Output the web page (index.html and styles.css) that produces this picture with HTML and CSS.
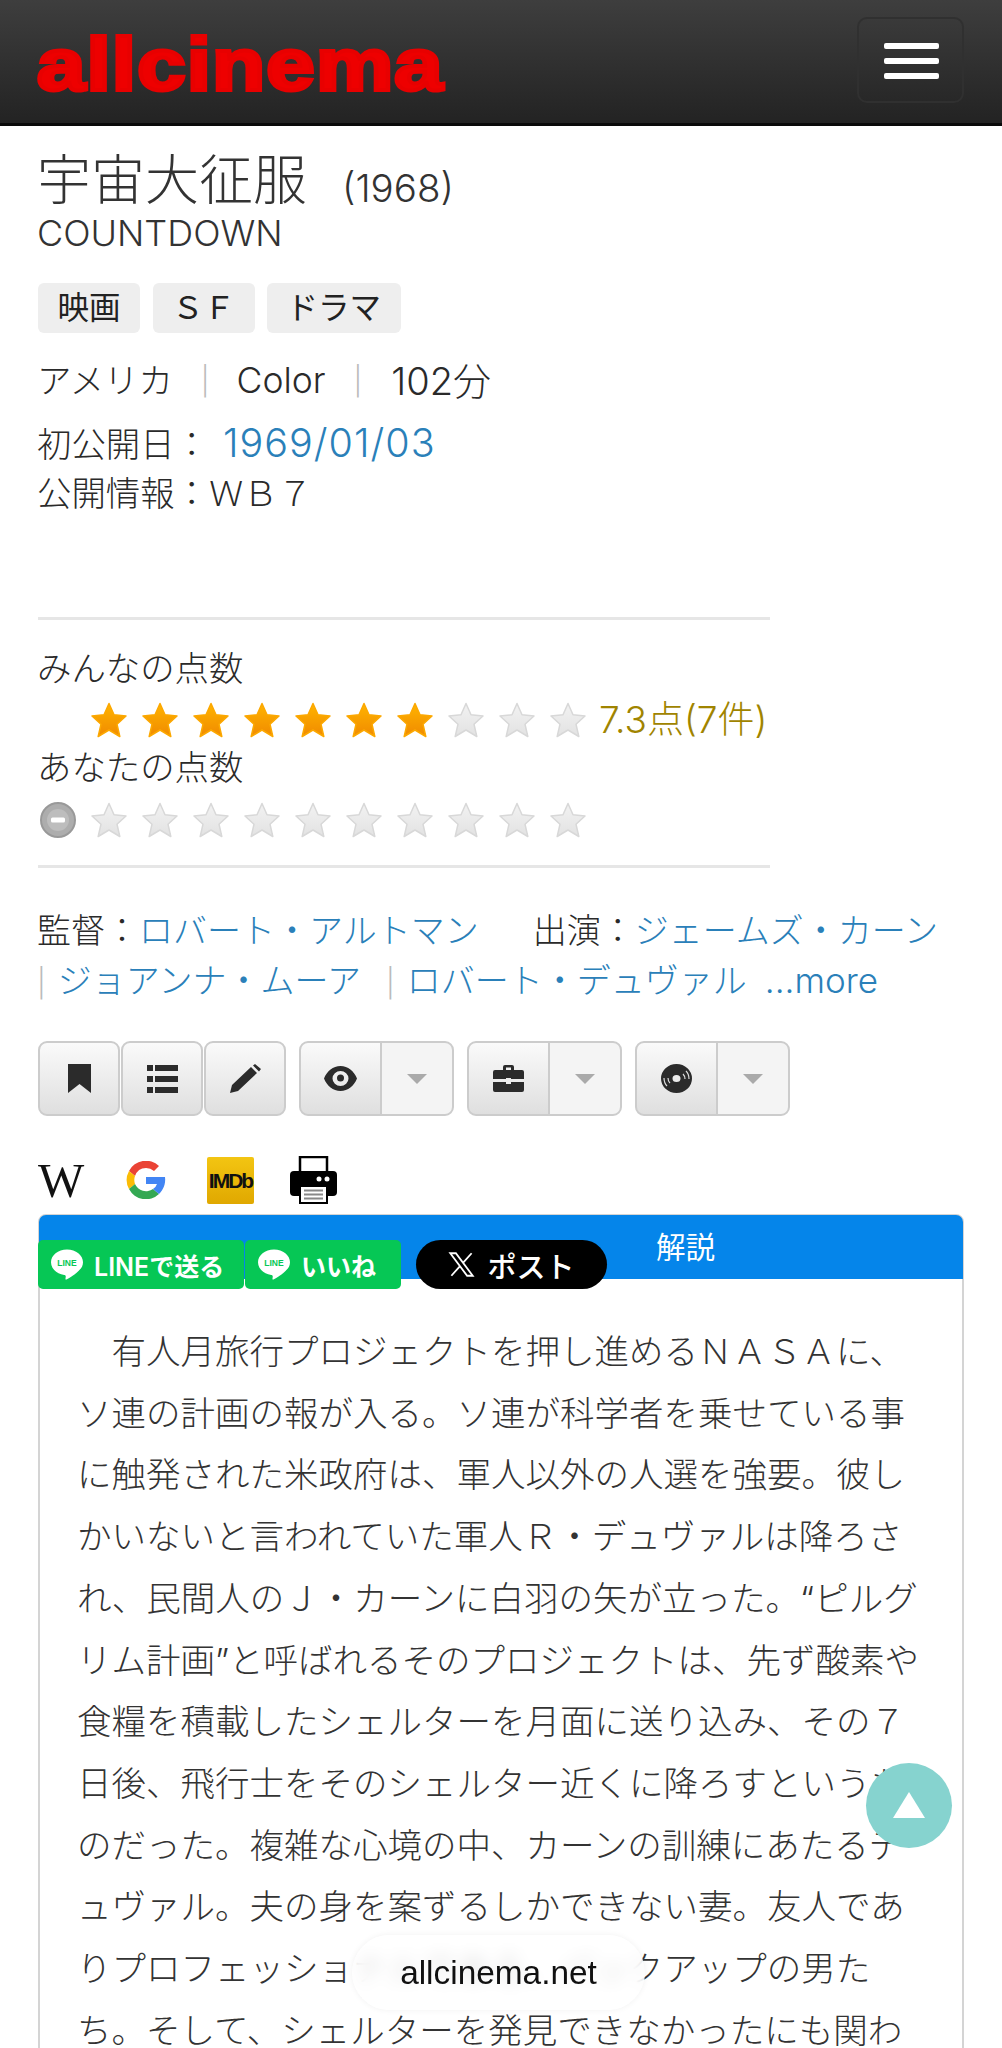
FILE: index.html
```html
<!DOCTYPE html>
<html lang="ja">
<head>
<meta charset="utf-8">
<title>宇宙大征服 - allcinema</title>
<link rel="stylesheet" href="styles.css">
</head>
<body>
<svg class="defs" width="0" height="0" aria-hidden="true">
  <defs>
    <linearGradient id="gold" x1="0" y1="0" x2="0" y2="1">
      <stop offset="0" stop-color="#ffb400"/><stop offset="1" stop-color="#f08a00"/>
    </linearGradient>
    <linearGradient id="silver" x1="0" y1="0" x2="0" y2="1">
      <stop offset="0" stop-color="#f2f2f2"/><stop offset="1" stop-color="#e2e2e2"/>
    </linearGradient>
    <symbol id="star" viewBox="0 0 36 36">
      <path d="M18 1.500 23 12.800 35 14 26 22.200 28.800 34.500 18 28 7.200 34.500 10 22.200 1 14 13 12.800Z" stroke-linejoin="round"/>
    </symbol>
    <symbol id="line-logo" viewBox="0 0 34 32">
      <path fill="#fff" d="M17 1C8 1 1 6.700 1 13.800c0 6.300 5.600 11.600 13.200 12.600.5.100 1.200.3 1.400.8.200.4.100 1 .1 1.400l-.2 1.400c-.1.400-.3 1.500 1.500.8s9.100-5.400 12.400-9.200C31.600 19.700 33 17 33 13.800 33 6.700 26 1 17 1Z"/>
      <text x="17" y="17.500" text-anchor="middle" class="line-word">LINE</text>
    </symbol>
  </defs>
</svg>
<div class="page">
  <header class="topbar">
    <span class="logo">allcinema</span>
    <button class="toggle" type="button" aria-label="menu"><i></i><i></i><i></i></button>
  </header>
  <main class="content">
    <h1 class="title">宇宙大征服<small>(1968)</small></h1>
    <p class="orig">COUNTDOWN</p>
    <ul class="tags"><li>映画</li><li>ＳＦ</li><li>ドラマ</li></ul>
    <p class="info"><span>アメリカ</span><b>|</b><span class="color">Color</span><b>|</b><span class="dur">102分</span></p>
    <p class="release">初公開日：<a class="date" href="#">1969/01/03</a></p>
    <p class="release">公開情報：ＷＢ７</p>
    <section class="rating">
      <p class="rate-label">みんなの点数</p>
      <div class="stars-row">
        <svg class="star on"><use href="#star"/></svg><svg class="star on"><use href="#star"/></svg><svg class="star on"><use href="#star"/></svg><svg class="star on"><use href="#star"/></svg><svg class="star on"><use href="#star"/></svg><svg class="star on"><use href="#star"/></svg><svg class="star on"><use href="#star"/></svg><svg class="star"><use href="#star"/></svg><svg class="star"><use href="#star"/></svg><svg class="star"><use href="#star"/></svg>
        <span class="score">7.3点(7件)</span>
      </div>
      <p class="rate-label">あなたの点数</p>
      <div class="stars-row mine">
        <svg class="minus" viewBox="0 0 36 36"><circle cx="18" cy="18" r="17" fill="#adadad" stroke="#999" stroke-width="2"/><circle cx="18" cy="18" r="11" fill="#bdbdbd"/><rect x="11" y="15.500" width="14" height="5" rx="1.500" fill="#fff"/></svg>
        <svg class="star"><use href="#star"/></svg><svg class="star"><use href="#star"/></svg><svg class="star"><use href="#star"/></svg><svg class="star"><use href="#star"/></svg><svg class="star"><use href="#star"/></svg><svg class="star"><use href="#star"/></svg><svg class="star"><use href="#star"/></svg><svg class="star"><use href="#star"/></svg><svg class="star"><use href="#star"/></svg><svg class="star"><use href="#star"/></svg>
      </div>
    </section>
    <p class="cast">監督：<a href="#">ロバート・アルトマン</a><span class="gap"></span>出演：<a href="#">ジェームズ・カーン</a></p>
    <p class="cast"><b>|</b><a href="#">ジョアンナ・ムーア</a><b class="bar2">|</b><a href="#">ロバート・デュヴァル</a><a class="more" href="#">...more</a></p>
    <div class="actions">
      <div class="btn-group">
        <button class="btn" type="button"><svg width="23" height="29" viewBox="0 0 23 29"><path d="M0 0H23V29L11.500 20 0 29Z"/></svg></button>
        <button class="btn" type="button"><svg width="31" height="28" viewBox="0 0 31 28"><path d="M0 0h6v6H0zM8 0h23v6H8zM0 11h6v6H0zM8 11h23v6H8zM0 22h6v6H0zM8 22h23v6H8z"/></svg></button>
        <button class="btn" type="button"><svg width="31" height="29" viewBox="0 0 31 29"><path d="M0 29 2 21 21 3 27 9 8 27ZM23 1.500 25 0 31 5 29 7.500Z"/></svg></button>
      </div>
      <div class="split">
        <button class="btn main" type="button"><svg width="33" height="25" viewBox="0 0 33 25"><path fill-rule="evenodd" d="M16.500 0C24 0 30 5 33 12.500 30 20 24 25 16.500 25S3 20 0 12.500C3 5 9 0 16.500 0ZM16.500 5a8 7.500 0 1 0 0 15 8 7.500 0 0 0 0-15Z"/><circle cx="16.500" cy="12" r="3.500"/></svg></button>
        <button class="btn caret" type="button"><i></i></button>
      </div>
      <div class="split">
        <button class="btn main" type="button"><svg width="31" height="27" viewBox="0 0 31 27"><path fill-rule="evenodd" d="M10 5V2q0-2 2-2h7q2 0 2 2v3h8q2 0 2 2v7H18v-1h-5v1H0V7q0-2 2-2ZM13 2.500V5h5V2.500Z"/><path d="M0 17h13v2h5v-2h13v8q0 2-2 2H2q-2 0-2-2Z"/></svg></button>
        <button class="btn caret" type="button"><i></i></button>
      </div>
      <div class="split">
        <button class="btn main" type="button"><svg width="31" height="29" viewBox="0 0 31 29"><path fill-rule="evenodd" d="M15.500 0a15.500 14.500 0 1 0 0 29 15.500 14.500 0 0 0 0-29ZM15.500 11a4 3.500 0 1 1 0 7 4 3.500 0 0 1 0-7Z"/><path d="M22 10q2 2 2 5M25 7q3 3 3 8M9 19q-2-2-2-5M6 22q-3-3-3-8" fill="none" stroke="#ddd" stroke-width="1.200"/></svg></button>
        <button class="btn caret" type="button"><i></i></button>
      </div>
    </div>
    <div class="links">
      <span class="wiki">W</span>
      <svg class="goog" width="40" height="38" viewBox="0 0 40 38"><path d="M20 7a12 12 0 0 1 8 3l5-5A19 19 0 0 0 3 10l6 5A12 12 0 0 1 20 7Z" fill="#ea4335"/><path d="M3 10a19 19 0 0 0 0 18l6-5a12 12 0 0 1 0-8Z" fill="#fbbc05"/><path d="M9 23a12 12 0 0 0 18 5l6 5A19 19 0 0 1 3 28Z" fill="#34a853"/><path d="M39 16H20v7h11a9 9 0 0 1-4 5l6 5c4-4 7-10 6-17Z" fill="#4285f4"/></svg>
      <span class="imdb">IMDb</span>
      <svg class="print" width="47" height="48" viewBox="0 0 47 48"><path d="M10 16V1h27v15" fill="#fff" stroke="#000" stroke-width="2.500"/><path d="M4 15h39q4 0 4 4v17q0 4-4 4H4q-4 0-4-4V19q0-4 4-4Z"/><circle cx="29" cy="23" r="2.500" fill="#fff"/><circle cx="37" cy="23" r="2.500" fill="#fff"/><rect x="10" y="30" width="27" height="17" fill="#fff" stroke="#000" stroke-width="2"/><path d="M14 34.500h19M14 38.500h19M14 42.500h19" stroke="#888" stroke-width="2"/></svg>
    </div>
    <section class="panel">
      <div class="panel-head">
        <div class="share">
          <a class="line line-send" href="#"><svg width="34" height="33"><use href="#line-logo"/></svg>LINEで送る</a>
          <a class="line line-like" href="#"><svg width="34" height="33"><use href="#line-logo"/></svg>いいね</a>
          <a class="post" href="#"><svg width="27" height="27" viewBox="0 0 24 24"><path fill="none" stroke="#fff" stroke-width="1.600" d="M2 2h5l15 20h-5ZM21 2 13.500 10.300M10.500 13.600 3 22"/></svg>ポスト</a>
        </div>
        <span class="panel-title">解説</span>
      </div>
      <div class="panel-body">
        <p class="synopsis">　有人月旅行プロジェクトを押し進めるＮＡＳＡに、<br>ソ連の計画の報が入る。ソ連が科学者を乗せている事<br>に触発された米政府は、軍人以外の人選を強要。彼し<br>かいないと言われていた軍人Ｒ・デュヴァルは降ろさ<br>れ、民間人のＪ・カーンに白羽の矢が立った。“ピルグ<br>リム計画”と呼ばれるそのプロジェクトは、先ず酸素や<br>食糧を積載したシェルターを月面に送り込み、その７<br>日後、飛行士をそのシェルター近くに降ろすというも<br>のだった。複雑な心境の中、カーンの訓練にあたるデ<br>ュヴァル。夫の身を案ずるしかできない妻。友人であ<br>りプロフェッショナルである、バックアップの男た<br>ち。そして、シェルターを発見できなかったにも関わ</p>
      </div>
    </section>
  </main>
  <a class="totop" href="#" aria-label="top"><i></i></a>
  <div class="urlbar">allcinema.net</div>
</div>
</body>
</html>
```
FILE: styles.css
```css
* { box-sizing: border-box; }
html, body { margin: 0; padding: 0; background: #fff; }
body {
  font-family: Inter, "Noto Sans CJK JP", sans-serif;
  font-size: 34.4px;
  font-weight: 300;
  color: #2a2a2a;
}
p, h1, ul { margin: 0; padding: 0; }
a { color: #2a80b9; text-decoration: none; }
.defs { position: absolute; }
.page { position: relative; width: 1002px; height: 2048px; overflow: hidden; }

.topbar {
  height: 126px;
  display: flex;
  align-items: flex-start;
  justify-content: space-between;
  padding: 17px 38px 0 37px;
  background: linear-gradient(#3e3e3e, #232323);
  border-bottom: 3px solid #0a0a0a;
}
.logo {
  display: block;
  margin-top: 3px;
  font-family: "Liberation Sans", sans-serif;
  font-size: 74px;
  line-height: 90px;
  font-weight: 700;
  color: #ee0000;
  -webkit-text-stroke: 4px #e80000;
  letter-spacing: 1px;
  transform: scaleX(1.175);
  transform-origin: left center;
}
.toggle {
  width: 107px;
  height: 86px;
  padding: 24px 25px 0;
  background: none;
  border: 2px solid #303030;
  border-radius: 10px;
  display: flex;
  flex-direction: column;
  gap: 9px;
}
.toggle i { display: block; width: 55px; height: 6px; flex: none; border-radius: 2px; background: #fff; }

.content { padding: 0 38px; }
.title, .orig, .info, .release, .rate-label, .cast { margin-left: -1px; }
.title { font-size: 54px; font-weight: 300; line-height: 74px; margin-top: 18px; color: #333; }
.title small { font-size: 38.5px; line-height: 1; margin-left: 35px; position: relative; top: 2px; }
.orig { font-size: 36px; line-height: 42px; margin-top: -6px; color: #333; }
.tags { list-style: none; display: flex; gap: 12.5px; margin-top: 29px; }
.tags li { height: 50px; padding: 0 19.5px; line-height: 50px; font-size: 31.5px; font-weight: 400; background: #eee; border-radius: 6px; color: #222; }
.info { display: flex; align-items: center; margin-top: 23px; line-height: 50px; }
.info b { font-weight: 300; color: #bbb; margin: 0 27px 0 28px; font-size: 28px; }
.color { font-size: 35.5px; }
.dur { font-size: 38px; margin-left: 2px; }
.release { line-height: 49px; }
.info + .release { margin-top: 14px; }
.date { font-size: 39.5px; line-height: 1; letter-spacing: 1px; margin-left: 14px; }

.rating { width: 732px; margin-top: 99px; border-top: 3px solid #e6e6e6; border-bottom: 3px solid #e6e6e6; padding: 25px 0 20px; }
.rate-label { line-height: 48px; }
.stars-row { height: 49px; display: flex; align-items: center; padding-left: 53px; gap: 15px; margin-top: 2px; }
.stars-row.mine { padding-left: 2px; gap: 15px; height: 50px; margin-top: 3px; }
.star { width: 36px; height: 36px; flex: none; fill: url(#silver); stroke: #d8d8d8; stroke-width: 1.500; filter: blur(0.5px); }
.star.on { fill: url(#gold); stroke: #fca800; }
.minus { width: 36px; height: 36px; flex: none; filter: blur(0.4px); }
.score { color: #a08400; font-size: 37px; margin: -6px 0 0 -2px; white-space: nowrap; }

.cast { font-size: 34px; line-height: 50px; white-space: nowrap; }
.rating + .cast { margin-top: 38px; }
.cast b { font-weight: 300; color: #bbb; font-size: 28px; line-height: 1; margin: 0 12px 0 0; }
.cast .bar2 { margin: 0 12px 0 25px; }
.gap { display: inline-block; width: 54px; }
.more { margin-left: 18px; font-size: 35px; line-height: 1; }

.actions { display: flex; margin-top: 35px; gap: 13px; }
.btn-group { display: flex; gap: 1px; }
.btn {
  height: 75px;
  width: 82px;
  padding: 0;
  display: flex;
  align-items: center;
  justify-content: center;
  border: 2px solid #ccc;
  border-radius: 9px;
  background: linear-gradient(#fafafa, #dfdfdf);
}
.btn svg { fill: #2b2b2b; }
.split { display: flex; }
.split .main { width: 83px; border-radius: 9px 0 0 9px; margin-right: -1px; }
.split .caret { width: 73px; border-left-width: 1px; border-radius: 0 9px 9px 0; background: #f4f4f4; }
.caret i { width: 0; height: 0; border: 10px solid transparent; border-top-color: #aaa; border-bottom-width: 0; }

.links { display: flex; align-items: center; height: 50px; margin-top: 39px; }
.wiki { width: 46px; font-family: "Liberation Serif", serif; font-size: 49px; font-weight: 400; line-height: 50px; color: #111; transform: translateY(1px); }
.goog { margin-left: 42px; }
.imdb {
  width: 47px;
  height: 47px;
  margin-left: 41px;
  background: linear-gradient(#f3c512, #e0a800);
  border-radius: 2px;
  font-family: "Liberation Sans", sans-serif;
  font-size: 21px;
  font-weight: 700;
  line-height: 47px;
  text-align: center;
  color: #111;
  letter-spacing: -2px;
}
.print { margin-left: 36px; }

.panel {
  width: 926px;
  margin-top: 9px;
  border: 2px solid #d4d4d4;
  border-radius: 8px 8px 0 0;
}
.panel-head {
  height: 64px;
  margin: -1px -1px 0;
  background: #0585ea;
  border-radius: 7px 7px 0 0;
  display: flex;
  position: relative;
}
.share { position: absolute; left: -1px; top: 25px; display: flex; align-items: flex-start; }
.line {
  display: flex;
  align-items: center;
  height: 49px;
  background: #06c755;
  color: #fff;
  border-radius: 5px;
  font-size: 25px;
  font-weight: 600;
}
.line svg { flex: none; }
.line-send { width: 206px; padding-left: 12px; gap: 10px; }
.line-like { width: 156px; margin-left: 1px; padding-left: 12px; gap: 10px; }
.line-word { font: 700 8.500px "Liberation Sans", sans-serif; fill: #06c755; }
.post {
  display: flex;
  align-items: center;
  justify-content: center;
  gap: 12px;
  width: 191px;
  height: 49px;
  margin-left: 15px;
  background: #000;
  color: #fff;
  border-radius: 25px;
  font-size: 29px;
  font-weight: 500;
}
.panel-title { margin: 15px 0 0 617px; font-size: 29.5px; font-weight: 400; line-height: 34px; color: #fff; }
.panel-body { padding: 42px 38px 0 37px; }
.synopsis { font-size: 34.5px; line-height: 61.7px; white-space: nowrap; color: #333; }

.totop {
  position: absolute;
  left: 866px;
  top: 1763px;
  width: 86px;
  height: 85px;
  border-radius: 50%;
  background: #86d3cf;
  display: flex;
  align-items: center;
  justify-content: center;
}
.totop i { width: 0; height: 0; border: 16px solid transparent; border-top-width: 0; border-bottom: 26px solid #fff; margin-bottom: 2px; }

.urlbar {
  position: absolute;
  left: 352px;
  top: 1935px;
  width: 293px;
  height: 75px;
  border-radius: 38px;
  background: rgba(255, 255, 255, 0.78);
  -webkit-backdrop-filter: blur(8px);
  backdrop-filter: blur(8px);
  box-shadow: 0 0 6px rgba(0, 0, 0, 0.06);
  font-family: "Liberation Sans", sans-serif;
  font-size: 33.4px;
  font-weight: 400;
  line-height: 75px;
  text-align: center;
  color: #111;
}
```
